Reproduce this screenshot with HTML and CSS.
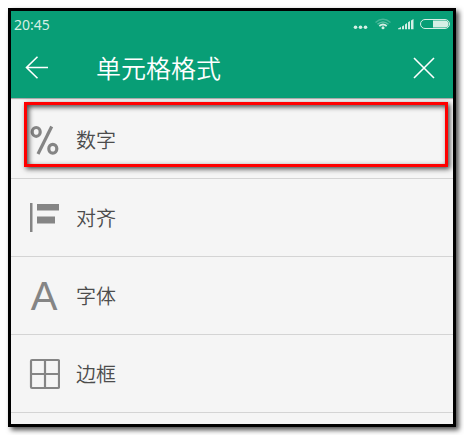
FILE: index.html
```html
<!DOCTYPE html>
<html lang="zh-CN">
<head>
    <meta charset="UTF-8">
    <meta name="viewport" content="width=device-width, initial-scale=1.0">
    <title>单元格格式</title>
    <link rel="stylesheet" href="styles.css">
</head>
<body>
    <div class="screen">
        <header class="header">
            <div class="status-bar">
                <span class="time">20:45</span>
                <svg class="status-icons" width="98" height="14" viewBox="0 0 98 14" aria-hidden="true">
                    <g fill="#d5efe5">
                        <circle cx="3.5" cy="10.2" r="1.8"/>
                        <circle cx="8.5" cy="10.2" r="1.8"/>
                        <circle cx="13.5" cy="10.2" r="1.8"/>
                    </g>
                    <!-- wifi -->
                    <g fill="none" stroke="#d5efe5" stroke-width="1.4">
                        <path d="M23.5 5.5Q31 -1 38.5 5.5" opacity=".3"/>
                        <path d="M25.5 7.3Q31 2.5 36.5 7.3" opacity=".4"/>
                        <path d="M27.3 9Q31 6 34.7 9" stroke-width="1.8"/>
                    </g>
                    <circle cx="31" cy="10.8" r="1.5" fill="#d5efe5"/>
                    <!-- signal -->
                    <path d="M46 12.2V11.5L49 10V12.2ZM50 12.2V9.4L52 8.2V12.2ZM53 12.2V7.4L55 6V12.2ZM56 12.2V5.2L58 4V12.2ZM59 12.2V3.4L61.5 2V12.2Z" fill="#d5efe5"/>
                    <!-- battery -->
                    <rect x="68.5" y="2.5" width="29" height="9" rx="4.5" fill="none" stroke="#d5efe5"/>
                    <path d="M81 3.5H93A3.5 3.5 0 0 1 93 10.5H81Z" fill="#d5efe5"/>
                </svg>
            </div>
            <div class="title-bar">
                <button type="button" class="icon-button" aria-label="返回">
                    <svg width="24" height="24" viewBox="0 0 24 24" fill="none" stroke="#fff" stroke-width="1.6">
                        <path d="M12.5 .8L1.5 11.5L12.5 22.2M1.5 11.5H23"/>
                    </svg>
                </button>
                <h1>单元格格式</h1>
                <button type="button" class="icon-button" aria-label="关闭">
                    <svg width="22" height="22" viewBox="0 0 22 22" fill="none" stroke="#fff" stroke-width="1.6">
                        <path d="M1 1L21 21M21 1L1 21"/>
                    </svg>
                </button>
            </div>
        </header>

        <main class="menu">
            <button type="button" class="menu-item highlighted">
                <svg class="icon" viewBox="0 0 32 32" fill="none" stroke="#858585" stroke-width="3.2">
                    <ellipse cx="8.2" cy="7.9" rx="4" ry="4.4"/>
                    <ellipse cx="24.8" cy="24.7" rx="4" ry="4.4"/>
                    <path d="M23.7 2.5L10 30"/>
                </svg>
                <span>数字</span>
            </button>
            <button type="button" class="menu-item">
                <svg class="icon" viewBox="0 0 32 32" fill="#858585">
                    <rect x="2" y="1" width="2.5" height="29"/>
                    <rect x="9" y="2" width="22" height="6.5"/>
                    <rect x="9" y="14.5" width="18" height="7"/>
                </svg>
                <span>对齐</span>
            </button>
            <button type="button" class="menu-item">
                <span class="icon letter" aria-hidden="true">A</span>
                <span>字体</span>
            </button>
            <button type="button" class="menu-item">
                <svg class="icon" viewBox="0 0 32 32" fill="none" stroke="#858585" stroke-width="2.2">
                    <rect x="3" y="2" width="28" height="28" rx="1"/>
                    <path d="M17 2V30M3 16H31"/>
                </svg>
                <span>边框</span>
            </button>
        </main>
    </div>
</body>
</html>
```
FILE: styles.css
```css
:root {
    --primary-color: #089e76;
    --text-color: #4c4c4c;
    --icon-color: #858585;
    --line-color: #d4d4d4;
    --highlight-color: #f00;
    --font-family: "Noto Sans", "Noto Sans CJK SC", sans-serif;
}

* {
    box-sizing: border-box;
    margin: 0;
    padding: 0;
    font-family: var(--font-family);
}

body {
    padding: 8px;
    background: #fff;
}

.screen {
    border: 3px solid #000;
    background: #f5f5f5;
    padding-bottom: 11px;
    box-shadow: 3px 3px 5px rgba(0, 0, 0, 0.7);
}

.header {
    background: var(--primary-color);
    color: #fff;
    padding-bottom: 11px;
    box-shadow: 0 1px 1px rgba(0, 0, 0, 0.3);
}

.status-bar {
    display: flex;
    justify-content: space-between;
    align-items: center;
    height: 26px;
    padding: 0 3px;
}

.time {
    font-size: 14px;
    color: #d5efe5;
}

.title-bar {
    display: flex;
    align-items: center;
    height: 50px;
    padding: 12px 18px 0 14px;
}

h1 {
    flex: 1;
    margin-left: 47px;
    font-size: 25px;
    font-weight: 350;
    line-height: 36px;
}

button {
    border: none;
    background: none;
    cursor: pointer;
}

.icon-button {
    display: flex;
}

.menu {
    padding-top: 3px;
}

.menu-item {
    position: relative;
    display: flex;
    align-items: center;
    gap: 16px;
    width: 100%;
    height: 78px;
    padding: 0 17px;
    border-bottom: 1px solid var(--line-color);
    color: var(--text-color);
    font-size: 20px;
    font-weight: 350;
}

.icon {
    width: 32px;
    height: 32px;
    color: var(--icon-color);
}

.letter {
    font-family: "Liberation Sans", Arial, sans-serif;
    font-size: 40px;
    font-weight: 400;
    line-height: 32px;
    text-align: center;
}

/* red frame laid over the selected row */
.highlighted::after {
    content: "";
    position: absolute;
    top: 1px;
    right: 5px;
    bottom: 11px;
    left: 13px;
    border: 3px solid var(--highlight-color);
    box-shadow: 2px 2px 5px rgba(0, 0, 0, 0.7), inset 2px 2px 5px rgba(0, 0, 0, 0.7);
}
```
